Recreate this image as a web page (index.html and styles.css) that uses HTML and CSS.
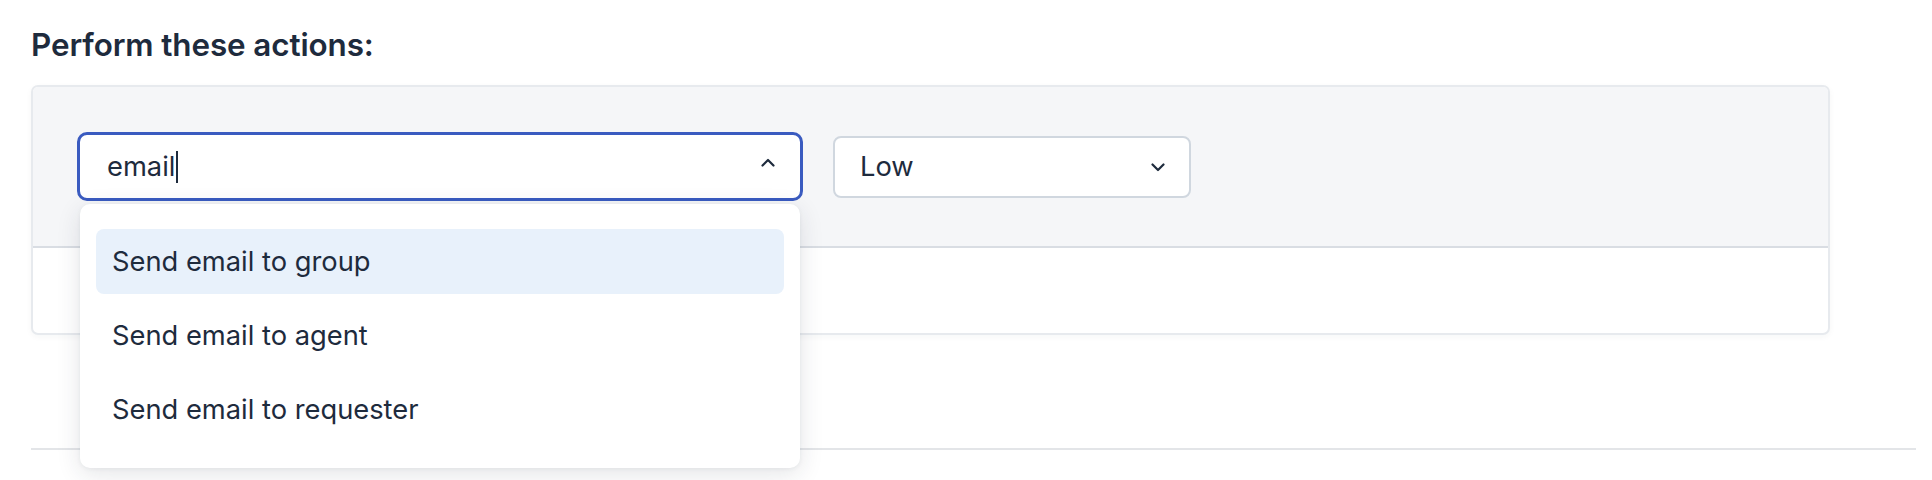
FILE: index.html
```html
<!DOCTYPE html>
<html lang="en">
<head>
<meta charset="utf-8">
<title>Perform these actions</title>
<link rel="stylesheet" href="styles.css">
</head>
<body>
<main class="page">
  <h2 class="section-title">Perform these actions:</h2>
  <section class="action-card">
    <div class="action-row">
      <div class="combo">
        <div class="combo-field">
          <span class="combo-value">email</span><span class="caret"></span>
          <svg class="chev" width="14" height="9" viewBox="0 0 14 9" aria-hidden="true"><path d="M1.5 7.5 L7 2 L12.5 7.5" fill="none" stroke="#1e2b3d" stroke-width="2.2" stroke-linecap="round" stroke-linejoin="round"/></svg>
        </div>
        <ul class="combo-menu">
          <li class="combo-option is-active">Send email to group</li>
          <li class="combo-option">Send email to agent</li>
          <li class="combo-option">Send email to requester</li>
        </ul>
      </div>
      <div class="select">
        <span class="select-value">Low</span>
        <svg class="chev" width="14" height="9" viewBox="0 0 14 9" aria-hidden="true"><path d="M1.5 1.5 L7 7 L12.5 1.5" fill="none" stroke="#1e2b3d" stroke-width="2.2" stroke-linecap="round" stroke-linejoin="round"/></svg>
      </div>
    </div>
    <div class="action-footer"></div>
  </section>
  <hr class="rule">
</main>
</body>
</html>
```

FILE: styles.css
```css
* { box-sizing: border-box; }
html, body { margin: 0; padding: 0; background: #ffffff; }
body {
  font-family: Inter, "Noto Sans", "Liberation Sans", sans-serif;
  color: #1e2b3d;
  min-height: 480px;
}
.page {
  padding: 25px 16px 28px 31px;
  min-height: 480px;
}
.section-title {
  margin: 0;
  font-size: 31.4px;
  line-height: 40px;
  font-weight: 600;
  color: #1e2b3d;
  letter-spacing: -0.1px;
}
.action-card {
  margin-top: 20px;
  width: 1799px;
  border: 2px solid #e7eaee;
  border-radius: 7px;
  background: #ffffff;
  box-shadow: 0 2px 6px rgba(30, 43, 61, 0.04);
}
.action-row {
  display: flex;
  align-items: center;
  gap: 30px;
  padding: 45px 44px;
  background: #f5f6f8;
  border-bottom: 2px solid #d9dde3;
  border-radius: 5px 5px 0 0;
}
.combo {
  position: relative;
  width: 726px;
}
.combo-field {
  display: flex;
  align-items: center;
  height: 69px;
  padding: 0 25px 0 27px;
  border: 3px solid #3a5bc0;
  border-radius: 10px;
  background: #ffffff;
  font-size: 27.3px;
}
.combo-value { line-height: 1; }
.caret {
  display: inline-block;
  width: 2px;
  height: 32px;
  background: #1e2b3d;
  margin-left: 1px;
}
.combo-field .chev { margin-left: auto; margin-top: -8px; }
.combo-menu {
  position: absolute;
  top: 72px;
  left: 3px;
  width: 720px;
  margin: 0;
  padding: 25px 16px 26px;
  list-style: none;
  background: #ffffff;
  border-radius: 10px;
  box-shadow: 0 6px 24px rgba(30, 43, 61, 0.12), 0 1px 4px rgba(30, 43, 61, 0.06);
  display: flex;
  flex-direction: column;
  gap: 9px;
  z-index: 5;
}
.combo-option {
  height: 65px;
  display: flex;
  align-items: center;
  padding: 0 16px;
  border-radius: 8px;
  font-size: 27.3px;
  color: #1e2b3d;
}
.combo-option.is-active { background: #e8f1fb; }
.select {
  display: flex;
  align-items: center;
  width: 358px;
  height: 62px;
  padding: 0 24px 0 25px;
  border: 2px solid #d0d7df;
  border-radius: 8px;
  background: #ffffff;
  font-size: 27.3px;
}
.select .chev { margin-left: auto; margin-top: 2px; }
.action-footer {
  height: 85px;
}
.rule {
  margin: 113px 0 0 0;
  border: 0;
  height: 2px;
  background: #e3e5e8;
}
```
